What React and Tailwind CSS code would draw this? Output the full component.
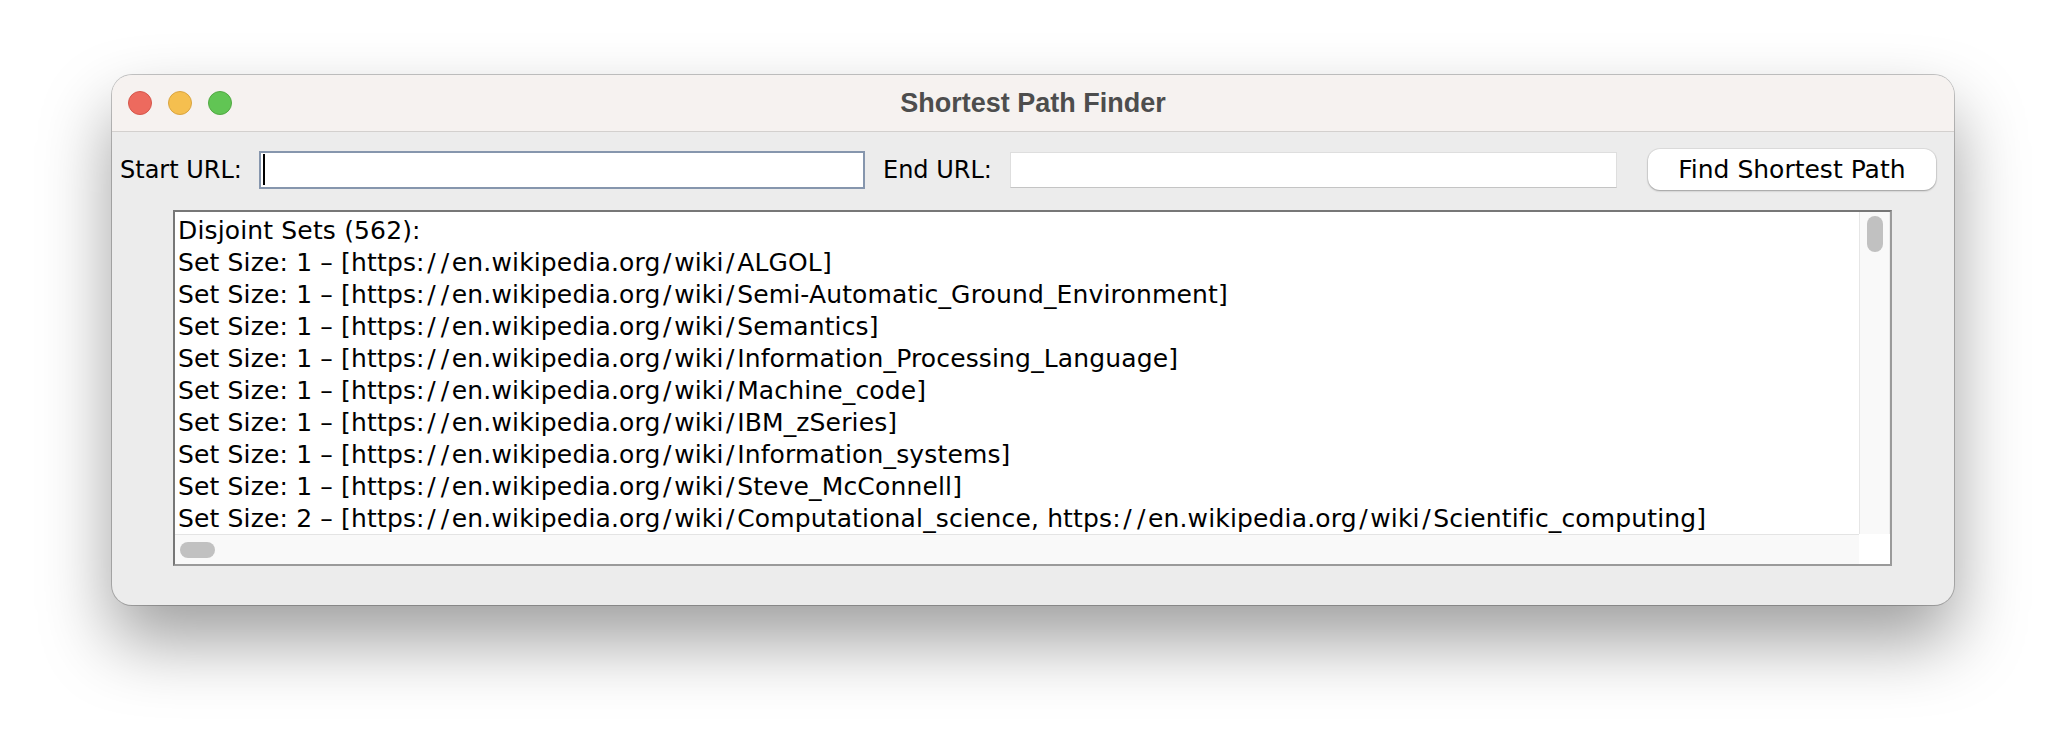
const lines = [
  'Disjoint Sets (562):',
  'Set Size: 1 – [https://en.wikipedia.org/wiki/ALGOL]',
  'Set Size: 1 – [https://en.wikipedia.org/wiki/Semi-Automatic_Ground_Environment]',
  'Set Size: 1 – [https://en.wikipedia.org/wiki/Semantics]',
  'Set Size: 1 – [https://en.wikipedia.org/wiki/Information_Processing_Language]',
  'Set Size: 1 – [https://en.wikipedia.org/wiki/Machine_code]',
  'Set Size: 1 – [https://en.wikipedia.org/wiki/IBM_zSeries]',
  'Set Size: 1 – [https://en.wikipedia.org/wiki/Information_systems]',
  'Set Size: 1 – [https://en.wikipedia.org/wiki/Steve_McConnell]',
  'Set Size: 2 – [https://en.wikipedia.org/wiki/Computational_science, https://en.wikipedia.org/wiki/Scientific_computing]',
]

const ui = { fontFamily: '"DejaVu Sans", "Noto Sans", sans-serif' }

// the mac font draws slashes wider than DejaVu does
function Line({ text }) {
  const parts = text.split('/')
  return (
    <div>
      {parts.map((p, i) => (
        <span key={i}>
          {p}
          {i < parts.length - 1 && <span className="px-[2.5px]">/</span>}
        </span>
      ))}
    </div>
  )
}

function TrafficLights() {
  return (
    <div className="flex items-center gap-[16px] pl-[16px]">
      <span className="w-[24px] h-[24px] rounded-full bg-[#ed6a5e] border border-[#d5564b]" />
      <span className="w-[24px] h-[24px] rounded-full bg-[#f5bf4f] border border-[#d9a440]" />
      <span className="w-[24px] h-[24px] rounded-full bg-[#61c554] border border-[#52a843]" />
    </div>
  )
}

export default function App() {
  return (
    <div className="w-[2066px] h-[754px] bg-white pl-[112px] pt-[75px] overflow-hidden">
      <div className="w-[1842px] h-[530px] rounded-[20px] overflow-hidden bg-[#ececec] shadow-[0_0_0_1px_rgba(0,0,0,0.22),0_36px_70px_rgba(0,0,0,0.38)]">
        {/* title bar */}
        <div className="h-[57px] grid grid-cols-[1fr_auto_1fr] items-center bg-[#f6f2f0] border-b border-[#d3d0ce]">
          <TrafficLights />
          <div
            className="text-[27px] font-bold text-[#4d4d4d]"
            style={{ fontFamily: '"Liberation Sans", Arial, sans-serif' }}
          >
            Shortest Path Finder
          </div>
          <div />
        </div>

        {/* controls */}
        <div className="pt-[17px] pl-[8px] h-[58px]" style={ui}>
          <div className="h-[41px] flex items-center text-[24px] text-black">
            <span>Start URL:</span>
            <div className="ml-[17px] w-[606px] h-[38px] bg-white border-2 border-[#8696ad] flex items-center pl-[2px]">
              <span className="w-[2px] h-[31px] bg-black" />
            </div>
            <span className="ml-[18px]">End URL:</span>
            <div className="ml-[18px] w-[607px] h-[36px] bg-white border border-[#dedede] border-b-[#c4c4c4]" />
            <button className="ml-[31px] w-[288px] h-[41px] rounded-[12px] bg-white text-[25px] text-black shadow-[0_0_0_1px_rgba(0,0,0,0.06),0_1px_2px_rgba(0,0,0,0.3)]">
              Find Shortest Path
            </button>
          </div>
        </div>

        {/* scroll pane */}
        <div className="mt-[20px] ml-[61px] w-[1719px] h-[356px] border-2 border-[#777] border-r-[#9a9a9a] border-b-[#9a9a9a] bg-white flex flex-col">
          <div className="flex h-[322px]">
            <div className="flex-1 overflow-hidden pl-[3px] pt-[3px] text-[25px] leading-[32px] tracking-[0.15px] text-black whitespace-nowrap" style={ui}>
              {lines.map((l, i) => (
                <Line key={i} text={l} />
              ))}
            </div>
            <div className="w-[31px] bg-[#f9f9f9] border-l border-[#e6e6e6] border-r border-r-[#ececec] flex justify-center pt-[4px]">
              <div className="w-[16px] h-[36px] rounded-full bg-[#c1c1c1]" />
            </div>
          </div>
          <div className="flex h-[30px]">
            <div className="flex-1 bg-[#f9f9f9] border-t border-[#e4e4e4] flex items-center pl-[5px]">
              <div className="w-[35px] h-[16px] rounded-full bg-[#c1c1c1]" />
            </div>
            <div className="w-[31px] bg-white" />
          </div>
        </div>
      </div>
    </div>
  )
}
